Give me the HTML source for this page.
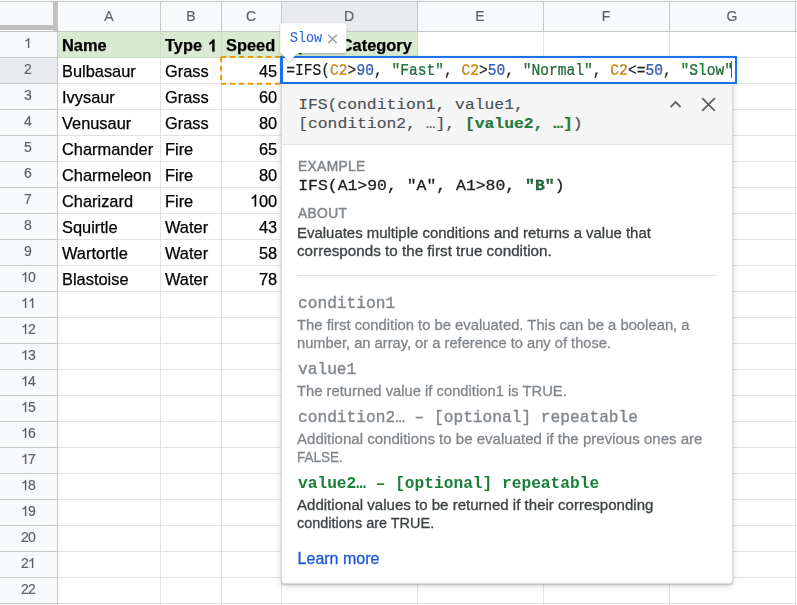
<!DOCTYPE html>
<html><head><meta charset="utf-8"><style>
html,body{margin:0;padding:0;}
body{width:797px;height:605px;overflow:hidden;position:relative;background:#fff;font-family:'Liberation Sans', sans-serif;}
.t{position:absolute;white-space:nowrap;}
.g{will-change:transform;}
.r{position:absolute;box-sizing:border-box;}
svg.r{overflow:visible;}
</style></head><body>
<div class="r" style="left:0px;top:0px;width:797px;height:31px;background:#f8f9fa;"></div><div class="r" style="left:0px;top:31px;width:57px;height:574px;background:#f8f9fa;"></div><div class="r" style="left:282px;top:2px;width:135px;height:29px;background:#e8eaed;"></div><div class="r" style="left:0px;top:58px;width:57px;height:25px;background:#e8eaed;"></div><div class="r" style="left:58px;top:32px;width:359px;height:25px;background:#d9ead3;"></div><div class="r" style="left:160px;top:31px;width:1px;height:574px;background:#e1e3e1;"></div><div class="r" style="left:221px;top:31px;width:1px;height:574px;background:#e1e3e1;"></div><div class="r" style="left:281px;top:31px;width:1px;height:574px;background:#e1e3e1;"></div><div class="r" style="left:417px;top:31px;width:1px;height:574px;background:#e1e3e1;"></div><div class="r" style="left:543px;top:31px;width:1px;height:574px;background:#e1e3e1;"></div><div class="r" style="left:669px;top:31px;width:1px;height:574px;background:#e1e3e1;"></div><div class="r" style="left:795px;top:31px;width:1px;height:574px;background:#e1e3e1;"></div><div class="r" style="left:57px;top:31px;width:740px;height:1px;background:#e1e3e1;"></div><div class="r" style="left:57px;top:57px;width:740px;height:1px;background:#e1e3e1;"></div><div class="r" style="left:57px;top:83px;width:740px;height:1px;background:#e1e3e1;"></div><div class="r" style="left:57px;top:109px;width:740px;height:1px;background:#e1e3e1;"></div><div class="r" style="left:57px;top:135px;width:740px;height:1px;background:#e1e3e1;"></div><div class="r" style="left:57px;top:161px;width:740px;height:1px;background:#e1e3e1;"></div><div class="r" style="left:57px;top:187px;width:740px;height:1px;background:#e1e3e1;"></div><div class="r" style="left:57px;top:213px;width:740px;height:1px;background:#e1e3e1;"></div><div class="r" style="left:57px;top:239px;width:740px;height:1px;background:#e1e3e1;"></div><div class="r" style="left:57px;top:265px;width:740px;height:1px;background:#e1e3e1;"></div><div class="r" style="left:57px;top:291px;width:740px;height:1px;background:#e1e3e1;"></div><div class="r" style="left:57px;top:317px;width:740px;height:1px;background:#e1e3e1;"></div><div class="r" style="left:57px;top:343px;width:740px;height:1px;background:#e1e3e1;"></div><div class="r" style="left:57px;top:369px;width:740px;height:1px;background:#e1e3e1;"></div><div class="r" style="left:57px;top:395px;width:740px;height:1px;background:#e1e3e1;"></div><div class="r" style="left:57px;top:421px;width:740px;height:1px;background:#e1e3e1;"></div><div class="r" style="left:57px;top:447px;width:740px;height:1px;background:#e1e3e1;"></div><div class="r" style="left:57px;top:473px;width:740px;height:1px;background:#e1e3e1;"></div><div class="r" style="left:57px;top:499px;width:740px;height:1px;background:#e1e3e1;"></div><div class="r" style="left:57px;top:525px;width:740px;height:1px;background:#e1e3e1;"></div><div class="r" style="left:57px;top:551px;width:740px;height:1px;background:#e1e3e1;"></div><div class="r" style="left:57px;top:577px;width:740px;height:1px;background:#e1e3e1;"></div><div class="r" style="left:57px;top:603px;width:740px;height:1px;background:#e1e3e1;"></div><div class="r" style="left:160px;top:32px;width:1px;height:25px;background:#cbdcc5;"></div><div class="r" style="left:221px;top:32px;width:1px;height:25px;background:#cbdcc5;"></div><div class="r" style="left:281px;top:32px;width:1px;height:25px;background:#cbdcc5;"></div><div class="r" style="left:417px;top:32px;width:1px;height:25px;background:#cbdcc5;"></div><div class="r" style="left:58px;top:57px;width:359px;height:1px;background:#d2dccf;"></div><div class="r" style="left:0px;top:1px;width:797px;height:1px;background:#c4c7c5;"></div><div class="r" style="left:0px;top:31px;width:797px;height:1px;background:#c4c7c5;"></div><div class="r" style="left:57px;top:2px;width:1px;height:29px;background:#c4c7c5;"></div><div class="r" style="left:160px;top:2px;width:1px;height:29px;background:#c4c7c5;"></div><div class="r" style="left:221px;top:2px;width:1px;height:29px;background:#c4c7c5;"></div><div class="r" style="left:281px;top:2px;width:1px;height:29px;background:#c4c7c5;"></div><div class="r" style="left:417px;top:2px;width:1px;height:29px;background:#c4c7c5;"></div><div class="r" style="left:543px;top:2px;width:1px;height:29px;background:#c4c7c5;"></div><div class="r" style="left:669px;top:2px;width:1px;height:29px;background:#c4c7c5;"></div><div class="r" style="left:795px;top:2px;width:1px;height:29px;background:#c4c7c5;"></div><div class="r" style="left:57px;top:31px;width:1px;height:574px;background:#c4c7c5;"></div><div class="r" style="left:0px;top:31px;width:57px;height:1px;background:#c4c7c5;"></div><div class="r" style="left:0px;top:57px;width:57px;height:1px;background:#c4c7c5;"></div><div class="r" style="left:0px;top:83px;width:57px;height:1px;background:#c4c7c5;"></div><div class="r" style="left:0px;top:109px;width:57px;height:1px;background:#c4c7c5;"></div><div class="r" style="left:0px;top:135px;width:57px;height:1px;background:#c4c7c5;"></div><div class="r" style="left:0px;top:161px;width:57px;height:1px;background:#c4c7c5;"></div><div class="r" style="left:0px;top:187px;width:57px;height:1px;background:#c4c7c5;"></div><div class="r" style="left:0px;top:213px;width:57px;height:1px;background:#c4c7c5;"></div><div class="r" style="left:0px;top:239px;width:57px;height:1px;background:#c4c7c5;"></div><div class="r" style="left:0px;top:265px;width:57px;height:1px;background:#c4c7c5;"></div><div class="r" style="left:0px;top:291px;width:57px;height:1px;background:#c4c7c5;"></div><div class="r" style="left:0px;top:317px;width:57px;height:1px;background:#c4c7c5;"></div><div class="r" style="left:0px;top:343px;width:57px;height:1px;background:#c4c7c5;"></div><div class="r" style="left:0px;top:369px;width:57px;height:1px;background:#c4c7c5;"></div><div class="r" style="left:0px;top:395px;width:57px;height:1px;background:#c4c7c5;"></div><div class="r" style="left:0px;top:421px;width:57px;height:1px;background:#c4c7c5;"></div><div class="r" style="left:0px;top:447px;width:57px;height:1px;background:#c4c7c5;"></div><div class="r" style="left:0px;top:473px;width:57px;height:1px;background:#c4c7c5;"></div><div class="r" style="left:0px;top:499px;width:57px;height:1px;background:#c4c7c5;"></div><div class="r" style="left:0px;top:525px;width:57px;height:1px;background:#c4c7c5;"></div><div class="r" style="left:0px;top:551px;width:57px;height:1px;background:#c4c7c5;"></div><div class="r" style="left:0px;top:577px;width:57px;height:1px;background:#c4c7c5;"></div><div class="r" style="left:0px;top:603px;width:57px;height:1px;background:#c4c7c5;"></div><div class="r" style="left:53px;top:2px;width:4px;height:29px;background:#c0c0c0;"></div><div class="r" style="left:0px;top:25px;width:57px;height:4.7px;background:#c0c0c0;"></div><div class="t g" style="left:8.80px;width:200px;top:7.15px;font:normal 14px/18px 'Liberation Sans', sans-serif;color:#5f6368;text-align:center;-webkit-text-stroke:0.2px #5f6368;">A</div><div class="t g" style="left:90.80px;width:200px;top:7.15px;font:normal 14px/18px 'Liberation Sans', sans-serif;color:#5f6368;text-align:center;-webkit-text-stroke:0.2px #5f6368;">B</div><div class="t g" style="left:151.30px;width:200px;top:7.15px;font:normal 14px/18px 'Liberation Sans', sans-serif;color:#5f6368;text-align:center;-webkit-text-stroke:0.2px #5f6368;">C</div><div class="t g" style="left:249.30px;width:200px;top:7.15px;font:normal 14px/18px 'Liberation Sans', sans-serif;color:#5f6368;text-align:center;-webkit-text-stroke:0.2px #5f6368;">D</div><div class="t g" style="left:380.30px;width:200px;top:7.15px;font:normal 14px/18px 'Liberation Sans', sans-serif;color:#5f6368;text-align:center;-webkit-text-stroke:0.2px #5f6368;">E</div><div class="t g" style="left:506.30px;width:200px;top:7.15px;font:normal 14px/18px 'Liberation Sans', sans-serif;color:#5f6368;text-align:center;-webkit-text-stroke:0.2px #5f6368;">F</div><div class="t g" style="left:632.30px;width:200px;top:7.15px;font:normal 14px/18px 'Liberation Sans', sans-serif;color:#5f6368;text-align:center;-webkit-text-stroke:0.2px #5f6368;">G</div><svg class="r" style="left:24.41px;top:34.20px;overflow:visible" width="7.78" height="14.00"><path d="M763 0H583V1147Q518 1085 412 1023T222 930V1104Q373 1175 486 1276T646 1472H763Z" transform="translate(0 14.000) scale(0.006836 -0.006836)" fill="#5f6368" stroke="#5f6368" stroke-width="29.3"/></svg><div class="t g" style="left:24.41px;top:60.35px;font:normal 14px/18px 'Liberation Sans', sans-serif;color:#5f6368;-webkit-text-stroke:0.2px #5f6368;">2</div><div class="t g" style="left:24.41px;top:86.35px;font:normal 14px/18px 'Liberation Sans', sans-serif;color:#5f6368;-webkit-text-stroke:0.2px #5f6368;">3</div><div class="t g" style="left:24.41px;top:112.35px;font:normal 14px/18px 'Liberation Sans', sans-serif;color:#5f6368;-webkit-text-stroke:0.2px #5f6368;">4</div><div class="t g" style="left:24.41px;top:138.35px;font:normal 14px/18px 'Liberation Sans', sans-serif;color:#5f6368;-webkit-text-stroke:0.2px #5f6368;">5</div><div class="t g" style="left:24.41px;top:164.35px;font:normal 14px/18px 'Liberation Sans', sans-serif;color:#5f6368;-webkit-text-stroke:0.2px #5f6368;">6</div><div class="t g" style="left:24.41px;top:190.35px;font:normal 14px/18px 'Liberation Sans', sans-serif;color:#5f6368;-webkit-text-stroke:0.2px #5f6368;">7</div><div class="t g" style="left:24.41px;top:216.35px;font:normal 14px/18px 'Liberation Sans', sans-serif;color:#5f6368;-webkit-text-stroke:0.2px #5f6368;">8</div><div class="t g" style="left:24.41px;top:242.35px;font:normal 14px/18px 'Liberation Sans', sans-serif;color:#5f6368;-webkit-text-stroke:0.2px #5f6368;">9</div><svg class="r" style="left:20.51px;top:268.20px;overflow:visible" width="7.78" height="14.00"><path d="M763 0H583V1147Q518 1085 412 1023T222 930V1104Q373 1175 486 1276T646 1472H763Z" transform="translate(0 14.000) scale(0.006836 -0.006836)" fill="#5f6368" stroke="#5f6368" stroke-width="29.3"/></svg><div class="t g" style="left:28.30px;top:268.35px;font:normal 14px/18px 'Liberation Sans', sans-serif;color:#5f6368;-webkit-text-stroke:0.2px #5f6368;">0</div><svg class="r" style="left:20.51px;top:294.20px;overflow:visible" width="7.78" height="14.00"><path d="M763 0H583V1147Q518 1085 412 1023T222 930V1104Q373 1175 486 1276T646 1472H763Z" transform="translate(0 14.000) scale(0.006836 -0.006836)" fill="#5f6368" stroke="#5f6368" stroke-width="29.3"/></svg><svg class="r" style="left:28.30px;top:294.20px;overflow:visible" width="7.78" height="14.00"><path d="M763 0H583V1147Q518 1085 412 1023T222 930V1104Q373 1175 486 1276T646 1472H763Z" transform="translate(0 14.000) scale(0.006836 -0.006836)" fill="#5f6368" stroke="#5f6368" stroke-width="29.3"/></svg><svg class="r" style="left:20.51px;top:320.20px;overflow:visible" width="7.78" height="14.00"><path d="M763 0H583V1147Q518 1085 412 1023T222 930V1104Q373 1175 486 1276T646 1472H763Z" transform="translate(0 14.000) scale(0.006836 -0.006836)" fill="#5f6368" stroke="#5f6368" stroke-width="29.3"/></svg><div class="t g" style="left:28.30px;top:320.35px;font:normal 14px/18px 'Liberation Sans', sans-serif;color:#5f6368;-webkit-text-stroke:0.2px #5f6368;">2</div><svg class="r" style="left:20.51px;top:346.20px;overflow:visible" width="7.78" height="14.00"><path d="M763 0H583V1147Q518 1085 412 1023T222 930V1104Q373 1175 486 1276T646 1472H763Z" transform="translate(0 14.000) scale(0.006836 -0.006836)" fill="#5f6368" stroke="#5f6368" stroke-width="29.3"/></svg><div class="t g" style="left:28.30px;top:346.35px;font:normal 14px/18px 'Liberation Sans', sans-serif;color:#5f6368;-webkit-text-stroke:0.2px #5f6368;">3</div><svg class="r" style="left:20.51px;top:372.20px;overflow:visible" width="7.78" height="14.00"><path d="M763 0H583V1147Q518 1085 412 1023T222 930V1104Q373 1175 486 1276T646 1472H763Z" transform="translate(0 14.000) scale(0.006836 -0.006836)" fill="#5f6368" stroke="#5f6368" stroke-width="29.3"/></svg><div class="t g" style="left:28.30px;top:372.35px;font:normal 14px/18px 'Liberation Sans', sans-serif;color:#5f6368;-webkit-text-stroke:0.2px #5f6368;">4</div><svg class="r" style="left:20.51px;top:398.20px;overflow:visible" width="7.78" height="14.00"><path d="M763 0H583V1147Q518 1085 412 1023T222 930V1104Q373 1175 486 1276T646 1472H763Z" transform="translate(0 14.000) scale(0.006836 -0.006836)" fill="#5f6368" stroke="#5f6368" stroke-width="29.3"/></svg><div class="t g" style="left:28.30px;top:398.35px;font:normal 14px/18px 'Liberation Sans', sans-serif;color:#5f6368;-webkit-text-stroke:0.2px #5f6368;">5</div><svg class="r" style="left:20.51px;top:424.20px;overflow:visible" width="7.78" height="14.00"><path d="M763 0H583V1147Q518 1085 412 1023T222 930V1104Q373 1175 486 1276T646 1472H763Z" transform="translate(0 14.000) scale(0.006836 -0.006836)" fill="#5f6368" stroke="#5f6368" stroke-width="29.3"/></svg><div class="t g" style="left:28.30px;top:424.35px;font:normal 14px/18px 'Liberation Sans', sans-serif;color:#5f6368;-webkit-text-stroke:0.2px #5f6368;">6</div><svg class="r" style="left:20.51px;top:450.20px;overflow:visible" width="7.78" height="14.00"><path d="M763 0H583V1147Q518 1085 412 1023T222 930V1104Q373 1175 486 1276T646 1472H763Z" transform="translate(0 14.000) scale(0.006836 -0.006836)" fill="#5f6368" stroke="#5f6368" stroke-width="29.3"/></svg><div class="t g" style="left:28.30px;top:450.35px;font:normal 14px/18px 'Liberation Sans', sans-serif;color:#5f6368;-webkit-text-stroke:0.2px #5f6368;">7</div><svg class="r" style="left:20.51px;top:476.20px;overflow:visible" width="7.78" height="14.00"><path d="M763 0H583V1147Q518 1085 412 1023T222 930V1104Q373 1175 486 1276T646 1472H763Z" transform="translate(0 14.000) scale(0.006836 -0.006836)" fill="#5f6368" stroke="#5f6368" stroke-width="29.3"/></svg><div class="t g" style="left:28.30px;top:476.35px;font:normal 14px/18px 'Liberation Sans', sans-serif;color:#5f6368;-webkit-text-stroke:0.2px #5f6368;">8</div><svg class="r" style="left:20.51px;top:502.20px;overflow:visible" width="7.78" height="14.00"><path d="M763 0H583V1147Q518 1085 412 1023T222 930V1104Q373 1175 486 1276T646 1472H763Z" transform="translate(0 14.000) scale(0.006836 -0.006836)" fill="#5f6368" stroke="#5f6368" stroke-width="29.3"/></svg><div class="t g" style="left:28.30px;top:502.35px;font:normal 14px/18px 'Liberation Sans', sans-serif;color:#5f6368;-webkit-text-stroke:0.2px #5f6368;">9</div><div class="t g" style="left:20.51px;top:528.35px;font:normal 14px/18px 'Liberation Sans', sans-serif;color:#5f6368;-webkit-text-stroke:0.2px #5f6368;">2</div><div class="t g" style="left:28.30px;top:528.35px;font:normal 14px/18px 'Liberation Sans', sans-serif;color:#5f6368;-webkit-text-stroke:0.2px #5f6368;">0</div><div class="t g" style="left:20.51px;top:554.35px;font:normal 14px/18px 'Liberation Sans', sans-serif;color:#5f6368;-webkit-text-stroke:0.2px #5f6368;">2</div><svg class="r" style="left:28.30px;top:554.20px;overflow:visible" width="7.78" height="14.00"><path d="M763 0H583V1147Q518 1085 412 1023T222 930V1104Q373 1175 486 1276T646 1472H763Z" transform="translate(0 14.000) scale(0.006836 -0.006836)" fill="#5f6368" stroke="#5f6368" stroke-width="29.3"/></svg><div class="t g" style="left:20.51px;top:580.35px;font:normal 14px/18px 'Liberation Sans', sans-serif;color:#5f6368;-webkit-text-stroke:0.2px #5f6368;">2</div><div class="t g" style="left:28.30px;top:580.35px;font:normal 14px/18px 'Liberation Sans', sans-serif;color:#5f6368;-webkit-text-stroke:0.2px #5f6368;">2</div><div class="t g" style="left:62.30px;top:34.71px;font:bold 16.4px/21px 'Liberation Sans', sans-serif;color:#000;-webkit-text-stroke:0.25px #000;">Name</div><div class="t g" style="left:165.30px;top:34.71px;font:bold 16.4px/21px 'Liberation Sans', sans-serif;color:#000;-webkit-text-stroke:0.25px #000;white-space:pre;">Type </div><svg class="r" style="left:208.13px;top:34.50px;overflow:visible" width="9.12" height="16.40"><path d="M813 0H532V1059Q378 915 169 846V1101Q279 1137 408 1238T585 1472H813Z" transform="translate(0 16.400) scale(0.008008 -0.008008)" fill="#000" stroke="#000" stroke-width="31.2"/></svg><div class="t g" style="left:226.30px;top:34.71px;font:bold 16.4px/21px 'Liberation Sans', sans-serif;color:#000;-webkit-text-stroke:0.25px #000;">Speed</div><div class="t g" style="left:286.60px;top:34.71px;font:bold 16.4px/21px 'Liberation Sans', sans-serif;color:#000;-webkit-text-stroke:0.25px #000;">Speed Category</div><div class="t g" style="left:62.30px;top:60.71px;font:normal 16.4px/21px 'Liberation Sans', sans-serif;color:#000;-webkit-text-stroke:0.25px #000;">Bulbasaur</div><div class="t g" style="left:165.30px;top:60.71px;font:normal 16.4px/21px 'Liberation Sans', sans-serif;color:#000;-webkit-text-stroke:0.25px #000;">Grass</div><div class="t g" style="right:520.20px;top:60.71px;font:normal 16.4px/21px 'Liberation Sans', sans-serif;color:#000;text-align:right;-webkit-text-stroke:0.25px #000;">45</div><div class="t g" style="left:62.30px;top:86.71px;font:normal 16.4px/21px 'Liberation Sans', sans-serif;color:#000;-webkit-text-stroke:0.25px #000;">Ivysaur</div><div class="t g" style="left:165.30px;top:86.71px;font:normal 16.4px/21px 'Liberation Sans', sans-serif;color:#000;-webkit-text-stroke:0.25px #000;">Grass</div><div class="t g" style="right:520.20px;top:86.71px;font:normal 16.4px/21px 'Liberation Sans', sans-serif;color:#000;text-align:right;-webkit-text-stroke:0.25px #000;">60</div><div class="t g" style="left:62.30px;top:112.71px;font:normal 16.4px/21px 'Liberation Sans', sans-serif;color:#000;-webkit-text-stroke:0.25px #000;">Venusaur</div><div class="t g" style="left:165.30px;top:112.71px;font:normal 16.4px/21px 'Liberation Sans', sans-serif;color:#000;-webkit-text-stroke:0.25px #000;">Grass</div><div class="t g" style="right:520.20px;top:112.71px;font:normal 16.4px/21px 'Liberation Sans', sans-serif;color:#000;text-align:right;-webkit-text-stroke:0.25px #000;">80</div><div class="t g" style="left:62.30px;top:138.71px;font:normal 16.4px/21px 'Liberation Sans', sans-serif;color:#000;-webkit-text-stroke:0.25px #000;">Charmander</div><div class="t g" style="left:165.30px;top:138.71px;font:normal 16.4px/21px 'Liberation Sans', sans-serif;color:#000;-webkit-text-stroke:0.25px #000;">Fire</div><div class="t g" style="right:520.20px;top:138.71px;font:normal 16.4px/21px 'Liberation Sans', sans-serif;color:#000;text-align:right;-webkit-text-stroke:0.25px #000;">65</div><div class="t g" style="left:62.30px;top:164.71px;font:normal 16.4px/21px 'Liberation Sans', sans-serif;color:#000;-webkit-text-stroke:0.25px #000;">Charmeleon</div><div class="t g" style="left:165.30px;top:164.71px;font:normal 16.4px/21px 'Liberation Sans', sans-serif;color:#000;-webkit-text-stroke:0.25px #000;">Fire</div><div class="t g" style="right:520.20px;top:164.71px;font:normal 16.4px/21px 'Liberation Sans', sans-serif;color:#000;text-align:right;-webkit-text-stroke:0.25px #000;">80</div><div class="t g" style="left:62.30px;top:190.71px;font:normal 16.4px/21px 'Liberation Sans', sans-serif;color:#000;-webkit-text-stroke:0.25px #000;">Charizard</div><div class="t g" style="left:165.30px;top:190.71px;font:normal 16.4px/21px 'Liberation Sans', sans-serif;color:#000;-webkit-text-stroke:0.25px #000;">Fire</div><svg class="r" style="left:249.94px;top:190.00px;overflow:visible" width="9.12" height="16.40"><path d="M763 0H583V1147Q518 1085 412 1023T222 930V1104Q373 1175 486 1276T646 1472H763Z" transform="translate(0 16.400) scale(0.008008 -0.008008)" fill="#000" stroke="#000" stroke-width="31.2"/></svg><div class="t g" style="right:520.20px;top:190.71px;font:normal 16.4px/21px 'Liberation Sans', sans-serif;color:#000;text-align:right;-webkit-text-stroke:0.25px #000;">00</div><div class="t g" style="left:62.30px;top:216.71px;font:normal 16.4px/21px 'Liberation Sans', sans-serif;color:#000;-webkit-text-stroke:0.25px #000;">Squirtle</div><div class="t g" style="left:165.30px;top:216.71px;font:normal 16.4px/21px 'Liberation Sans', sans-serif;color:#000;-webkit-text-stroke:0.25px #000;">Water</div><div class="t g" style="right:520.20px;top:216.71px;font:normal 16.4px/21px 'Liberation Sans', sans-serif;color:#000;text-align:right;-webkit-text-stroke:0.25px #000;">43</div><div class="t g" style="left:62.30px;top:242.71px;font:normal 16.4px/21px 'Liberation Sans', sans-serif;color:#000;-webkit-text-stroke:0.25px #000;">Wartortle</div><div class="t g" style="left:165.30px;top:242.71px;font:normal 16.4px/21px 'Liberation Sans', sans-serif;color:#000;-webkit-text-stroke:0.25px #000;">Water</div><div class="t g" style="right:520.20px;top:242.71px;font:normal 16.4px/21px 'Liberation Sans', sans-serif;color:#000;text-align:right;-webkit-text-stroke:0.25px #000;">58</div><div class="t g" style="left:62.30px;top:268.71px;font:normal 16.4px/21px 'Liberation Sans', sans-serif;color:#000;-webkit-text-stroke:0.25px #000;">Blastoise</div><div class="t g" style="left:165.30px;top:268.71px;font:normal 16.4px/21px 'Liberation Sans', sans-serif;color:#000;-webkit-text-stroke:0.25px #000;">Water</div><div class="t g" style="right:520.20px;top:268.71px;font:normal 16.4px/21px 'Liberation Sans', sans-serif;color:#000;text-align:right;-webkit-text-stroke:0.25px #000;">78</div><svg class="r" style="left:215px;top:50px" width="80" height="40"><path d="M6 7 H66 M6 33.7 H66 M6 7 V33.7" fill="none" stroke="#f29900" stroke-width="2" stroke-dasharray="5.2 3.8"/></svg>
<div class="r" style="left:280px;top:56px;width:457px;height:28px;border:2px solid #1a73e8;border-left-width:3px;background:#fff;box-shadow:0 1px 4px rgba(60,64,67,.2);"></div><div class="t" style="left:286.30px;top:61.91px;font:normal 14.6px/19px 'Liberation Mono', monospace;color:#202124;transform:scale(1,1.15);transform-origin:0 13.39px;-webkit-text-stroke:0.2px #202124;white-space:pre;">=IFS(<span style="color:#f29900">C2</span>&gt;<span style="color:#2f66d6">90</span>, <span style="color:#188038">"Fast"</span>, <span style="color:#f29900">C2</span>&gt;<span style="color:#2f66d6">50</span>, <span style="color:#188038">"Normal"</span>, <span style="color:#f29900">C2</span>&lt;=<span style="color:#2f66d6">50</span>, <span style="color:#188038">"Slow"</span></div><div class="r" style="left:731px;top:60.5px;width:1.1px;height:17.3px;background:#188038;"></div><svg class="r" style="left:270px;top:15px" width="90" height="60"><defs><filter id="sh" x="-20%" y="-20%" width="140%" height="160%"><feDropShadow dx="0" dy="1" stdDeviation="1.2" flood-color="#3c4043" flood-opacity="0.35"/></filter></defs><path d="M13 8 H73.5 Q76.3 8 76.3 10.8 V35.2 Q76.3 38 73.5 38 H27.6 L19.4 46.7 L10.3 37.5 V10.8 Q10.3 8 13 8 Z" fill="#fff" filter="url(#sh)"/></svg><div class="t" style="left:289.90px;top:29.83px;font:normal 13.4px/17px 'Liberation Mono', monospace;color:#2b66dc;transform:scale(1,1.13);transform-origin:0 12.07px;-webkit-text-stroke:0.1px #2b66dc;">Slow</div><svg class="r" style="left:327px;top:34px" width="11" height="10"><path d="M1.3 1 L9.7 9 M9.7 1 L1.3 9" stroke="#9aa0a6" stroke-width="1.7"/></svg><div class="r" style="left:281.3px;top:83.5px;width:451.8px;height:500px;background:#fff;border:1px solid #dcdcdc;border-top:0;border-radius:0 0 4px 4px;box-shadow:0 1px 2px rgba(60,64,67,.3),0 2px 6px 1px rgba(60,64,67,.13);"></div><div class="r" style="left:282.3px;top:83.5px;width:449.8px;height:61px;background:#f5f5f5;border-bottom:1px solid #e3e3e3;"></div><div class="t" style="left:298.20px;top:94.25px;font:normal 16.35px/21px 'Liberation Mono', monospace;color:#4d5156;transform:scale(1,0.9);transform-origin:0 14.85px;-webkit-text-stroke:0.2px #4d5156;white-space:pre;">IFS(condition1, value1,</div><div class="t" style="left:298.20px;top:113.15px;font:normal 16.35px/21px 'Liberation Mono', monospace;color:#4d5156;transform:scale(1,0.9);transform-origin:0 14.85px;-webkit-text-stroke:0.2px #4d5156;white-space:pre;">[condition2, …], <span style="color:#188038;font-weight:bold">[value2, …]</span>)</div><svg class="r" style="left:668px;top:98px" width="15" height="12"><path d="M2.6 9 L7.6 4 L12.6 9" fill="none" stroke="#5f6368" stroke-width="1.8"/></svg><svg class="r" style="left:700px;top:96px" width="17" height="17"><path d="M2.2 2.2 L14.8 14.8 M14.8 2.2 L2.2 14.8" fill="none" stroke="#5f6368" stroke-width="1.8"/></svg><div class="t g" style="left:297.80px;top:157.52px;font:normal 13.8px/18px 'Liberation Sans', sans-serif;color:#80868b;-webkit-text-stroke:0.45px #80868b;letter-spacing:0.35px;">EXAMPLE</div><div class="t" style="left:298.20px;top:174.82px;font:normal 16.45px/21px 'Liberation Mono', monospace;color:#202124;transform:scale(1,0.9);transform-origin:0 14.88px;-webkit-text-stroke:0.3px #202124;white-space:pre;">IFS(A1&gt;90, "A", A1&gt;80, <span style="color:#188038;font-weight:bold">"B"</span>)</div><div class="t g" style="left:297.50px;top:204.52px;font:normal 13.8px/18px 'Liberation Sans', sans-serif;color:#80868b;-webkit-text-stroke:0.45px #80868b;letter-spacing:0.35px;">ABOUT</div><div class="t" style="left:297.40px;top:222.70px;font:normal 15px/20px 'Liberation Sans', sans-serif;color:#3c4043;transform:scale(0.9963,1.02);transform-origin:0 15.20px;-webkit-text-stroke:0.3px #3c4043;">Evaluates multiple conditions and returns a value that</div><div class="t" style="left:297.40px;top:240.70px;font:normal 15px/20px 'Liberation Sans', sans-serif;color:#3c4043;transform:scale(1.0152,1.02);transform-origin:0 15.20px;-webkit-text-stroke:0.3px #3c4043;">corresponds to the first true condition.</div><div class="r" style="left:297px;top:275px;width:420px;height:1px;background:#dadce0;"></div><div class="t g" style="left:298.20px;top:293.99px;font:normal 16.2px/21px 'Liberation Mono', monospace;color:#80868b;-webkit-text-stroke:0.35px #80868b;">condition1</div><div class="t" style="left:297.40px;top:314.60px;font:normal 15px/20px 'Liberation Sans', sans-serif;color:#80868b;transform:scale(0.9877,1.02);transform-origin:0 15.20px;-webkit-text-stroke:0.3px #80868b;">The first condition to be evaluated. This can be a boolean, a</div><div class="t" style="left:297.40px;top:332.60px;font:normal 15px/20px 'Liberation Sans', sans-serif;color:#80868b;transform:scale(0.9793,1.02);transform-origin:0 15.20px;-webkit-text-stroke:0.3px #80868b;">number, an array, or a reference to any of those.</div><div class="t g" style="left:298.20px;top:359.99px;font:normal 16.2px/21px 'Liberation Mono', monospace;color:#80868b;-webkit-text-stroke:0.35px #80868b;">value1</div><div class="t" style="left:297.40px;top:380.60px;font:normal 15px/20px 'Liberation Sans', sans-serif;color:#80868b;transform:scale(0.9846,1.02);transform-origin:0 15.20px;-webkit-text-stroke:0.3px #80868b;">The returned value if condition1 is TRUE.</div><div class="t g" style="left:298.20px;top:407.99px;font:normal 16.2px/21px 'Liberation Mono', monospace;color:#80868b;-webkit-text-stroke:0.35px #80868b;white-space:pre;">condition2… – [optional] repeatable</div><div class="t" style="left:297.40px;top:428.70px;font:normal 15px/20px 'Liberation Sans', sans-serif;color:#80868b;transform:scale(1.0025,1.02);transform-origin:0 15.20px;-webkit-text-stroke:0.3px #80868b;">Additional conditions to be evaluated if the previous ones are</div><div class="t" style="left:297.40px;top:446.70px;font:normal 15px/20px 'Liberation Sans', sans-serif;color:#80868b;transform:scale(0.901,1.02);transform-origin:0 15.20px;-webkit-text-stroke:0.3px #80868b;">FALSE.</div><div class="t g" style="left:298.20px;top:473.99px;font:bold 16.2px/21px 'Liberation Mono', monospace;color:#188038;white-space:pre;">value2… – [optional] repeatable</div><div class="t" style="left:297.40px;top:494.70px;font:normal 15px/20px 'Liberation Sans', sans-serif;color:#3c4043;transform:scale(1.0034,1.02);transform-origin:0 15.20px;-webkit-text-stroke:0.3px #3c4043;">Additional values to be returned if their corresponding</div><div class="t" style="left:297.40px;top:512.70px;font:normal 15px/20px 'Liberation Sans', sans-serif;color:#3c4043;transform:scale(0.964,1.02);transform-origin:0 15.20px;-webkit-text-stroke:0.3px #3c4043;">conditions are TRUE.</div><div class="t" style="left:297.60px;top:547.95px;font:normal 16px/21px 'Liberation Sans', sans-serif;color:#1a56d6;transform:scale(1,1.03);transform-origin:0 16.05px;-webkit-text-stroke:0.3px #1a56d6;">Learn more</div>
</body></html>
